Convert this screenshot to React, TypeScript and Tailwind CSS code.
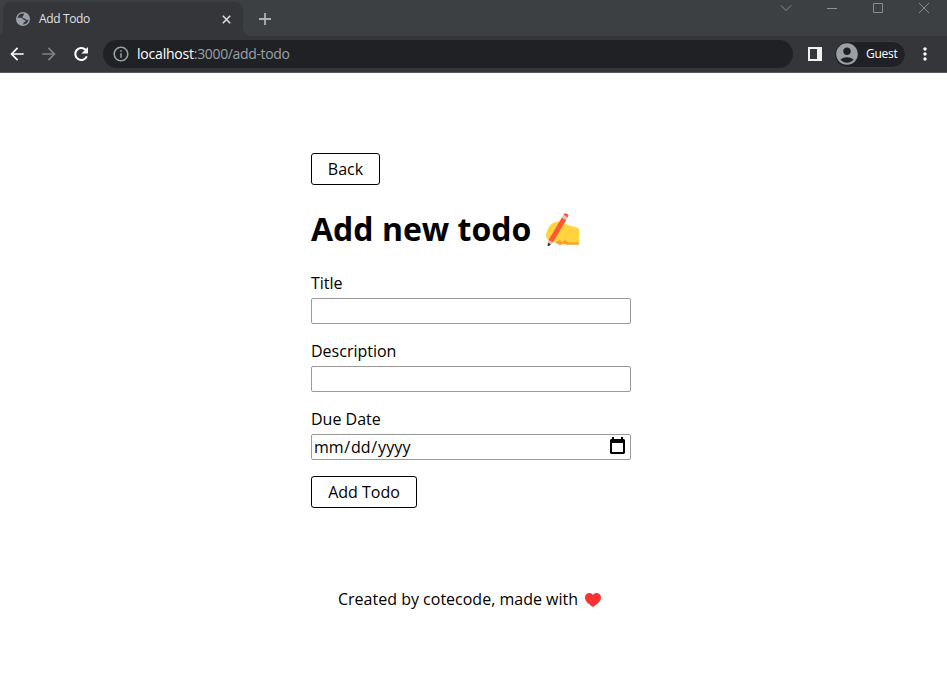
import React from "react";
import { MdArrowBack, MdArrowForward, MdInfoOutline, MdAccountCircle, MdMoreVert } from "react-icons/md";

function GlobeIcon() {
  return (
    <svg width="16" height="16" viewBox="0 0 16 16">
      <circle cx="8" cy="8" r="7" fill="#9aa0a6" />
      <path d="M8.800 2.500C6 2 3.200 3.500 2.500 6.800c1.500-.3 3-.2 4.200.2 1 .4 1.300 1.700 2.300 1.900 1 .2 1.600.3 1.600 1.100 0 .9-1.500.9-1.900 1.700-.3.600-.6 1.200-.7 1.700 3 .2 5.300-1.800 5.600-4.600-1.300.3-2.400 0-3.100-.9-.7-.9-2.600-.4-3-1.600C7.300 5 8.600 4.800 8.800 4z" fill="#35363a" />
    </svg>
  );
}

function ReloadIcon() {
  return (
    <svg className="ml-3 text-white" width="20" height="20" viewBox="0 0 20 20">
      <path d="M15.800 12.300A6 6 0 1 1 14.600 5.800L15.500 7" fill="none" stroke="currentColor" strokeWidth="2.100" />
      <path d="M17 3v6.500h-6.500z" fill="currentColor" />
    </svg>
  );
}

function WindowControls() {
  return (
    <div className="ml-auto flex h-4 items-center text-[#8b8e90]">
      <svg className="mr-[34px]" width="12" height="16" fill="none" stroke="currentColor"><path d="M1 5.5l5 5 5-5" /></svg>
      <svg className="mr-[34px]" width="12" height="16" fill="none" stroke="currentColor"><path d="M1 8.5h10" /></svg>
      <svg className="mr-[34px]" width="12" height="16" fill="none" stroke="currentColor"><path d="M1.5 3.5h9v9h-9z" /></svg>
      <svg className="mr-[17px]" width="12" height="16" fill="none" stroke="currentColor"><path d="M1 3l10 10M11 3L1 13" /></svg>
    </div>
  );
}

function TabStrip() {
  return (
    <div className="flex h-9 items-start bg-[#3c4043]">
      <div className="flex h-9 w-[3px] items-end">
        <svg width="3" height="8"><path d="M3 0C3 3 2 5 0 7v1h3z" fill="#35363a" /></svg>
      </div>
      <div className="mt-0.5 flex h-[34px] w-60 items-center rounded-t-lg bg-[#35363a] pl-3">
        <GlobeIcon />
        <span className="ml-2 whitespace-nowrap text-[12px] leading-4 tracking-[-0.35px] text-[#dfe1e5]">Add Todo</span>
        <svg className="mr-3 ml-auto" width="9" height="9" stroke="#dfe1e5" strokeWidth="1.5"><path d="M.8.8l7.400 7.400M8.200.8L.8 8.200" /></svg>
      </div>
      <svg className="mt-7" width="8" height="8"><path d="M0 0c0 4.400 3.600 8 8 8H0z" fill="#35363a" /></svg>
      <svg className="mt-[13px] ml-2" width="12" height="12" stroke="#aeb1b4" strokeWidth="1.800"><path d="M6 0v12M0 6h12" /></svg>
      <WindowControls />
    </div>
  );
}

function Toolbar() {
  return (
    <div className="flex h-[37px] items-center border-b border-[#57585b] bg-[#35363a] pl-[7px]">
      <MdArrowBack className="size-5 text-white" />
      <MdArrowForward className="ml-3 size-5 text-[#808184]" />
      <ReloadIcon />
      <div className="ml-3 flex h-7 w-[690px] items-center rounded-full bg-[#202124] pl-[9px]">
        <MdInfoOutline className="size-[18px] text-[#9aa0a6]" />
        <span className="ml-[7px] whitespace-nowrap text-[14px] leading-5 text-[#9aa0a6]"><span className="tracking-[-0.2px] text-white">localhost</span><span className="tracking-[-0.35px]">:3000/add-todo</span></span>
      </div>
      <svg className="ml-[15px]" width="14" height="14"><path d="M0 0h14v14H0zM2 2v10h7V2z" fill="#f1f1f2" fillRule="evenodd" /></svg>
      <div className="ml-3 flex h-[27px] w-[72px] items-center rounded-full border border-[#3c3d41] bg-[#202124]">
        <MdAccountCircle className="-ml-px size-[26px] shrink-0 text-[#9aa0a6]" />
        <span className="ml-[6px] text-[12px] leading-4 tracking-[-0.25px] text-white">Guest</span>
      </div>
      <MdMoreVert className="ml-[9px] size-5 text-white" />
    </div>
  );
}

function WritingHand() {
  return (
    <svg width="34" height="34" viewBox="0 0 34 34">
      <path d="M1 22.500C1.500 18 4 12 9 9.500c2-1 4-.8 6-.3l4 1.300c2 .2 3 1 5 2l6.500 1.500c2 .5 3.500 1.500 3.500 2.500V31H22l-3 .5L4 27c-2-.8-3.200-2.500-3-4.500z" fill="#ffd43f" />
      <path d="M9.500 29.500l4-1.500 1.500-1 2 2 3.500-2 3 2.500H34v2.300H22l-3.500-1.300-2.500 1.300c-1 .5-2 .2-2.500-.8z" fill="#ff9b2d" />
      <path d="M8 23.500l1.500.8L17 11l-1.500-.8z" fill="#f6b733" />
      <path d="M16.800 4.500l4.500 2.300L8 29.500l-4.500-2.300z" fill="#ff5b2e" />
      <path d="M18.300 2l1-1.300c1-1.200 4.700.5 4 2.200l-.8 1.800z" fill="#ff5b36" />
      <path d="M16.800 4.500l1.500-2.700 4.300 2.600-1.300 2.400z" fill="#dfc3c8" />
      <path d="M3.500 27.200L8 29.500l-4 3.500-1.300-.8z" fill="#f5b9a5" />
      <path d="M3.100 29.700l2.800 1.500L3.600 33.300l-1.100-.5z" fill="#3b303b" />
    </svg>
  );
}

function DateField() {
  return (
    <div className="flex h-[26px] w-80 items-center rounded-xs border border-[#9a9a9a] px-[2px]">
      <span className="text-[16px] leading-[22px]">
        mm<span className="px-[0.7px]">/</span>dd<span className="px-[0.8px]">/</span><span className="tracking-[0.2px]">yyyy</span>
      </span>
      <svg className="mr-[3px] mb-[3px] ml-auto" width="15" height="17">
        <path d="M2 0h2v2h7V0h2v2h1l1 1v13l-1 1H1l-1-1V3l1-1h1zM2 6v9h11V6z" fill="#000" fillRule="evenodd" />
      </svg>
    </div>
  );
}

function Page() {
  return (
    <main className="flex h-[622px] flex-col items-start bg-white pt-20 pl-[311px] text-black">
      <button className="h-8 w-[69px] rounded-[3px] border border-black text-[16px] leading-[22px]">Back</button>
      <h1 className="mt-[22px] flex h-11 items-center whitespace-nowrap text-[32px] leading-[44px] font-bold">
        Add new todo
        <span className="mt-0.5 ml-[14px]"><WritingHand /></span>
      </h1>
      <label className="mt-[21px] text-[16px] leading-[22px]">Title</label>
      <input className="mt-1 h-[26px] w-80 rounded-xs border border-[#9a9a9a]" />
      <label className="mt-4 text-[16px] leading-[22px]">Description</label>
      <input className="mt-1 h-[26px] w-80 rounded-xs border border-[#9a9a9a]" />
      <label className="mt-4 mb-1 text-[16px] leading-[22px]">Due Date</label>
      <DateField />
      <button className="mt-4 h-8 w-[106px] rounded-[3px] border border-black text-[16px] leading-[22px]">Add Todo</button>
      <footer className="mt-20 ml-[27px] flex items-center whitespace-nowrap text-[16px] leading-[22px]">
        Created by cotecode, made with
        <svg className="mt-[2px] ml-[7px]" width="16" height="14"><path d="M8 14C4 11 0 8.500 0 4.500 0 0 5.500-1.500 8 2c2.500-3.500 8-2 8 2.500C16 8.500 12 11 8 14z" fill="#fb3232" /></svg>
      </footer>
    </main>
  );
}

export default function App() {
  return (
    <div className="h-[695px] w-[947px] overflow-hidden bg-white font-['Open_Sans','Noto_Sans',sans-serif]">
      <TabStrip />
      <Toolbar />
      <Page />
    </div>
  );
}
